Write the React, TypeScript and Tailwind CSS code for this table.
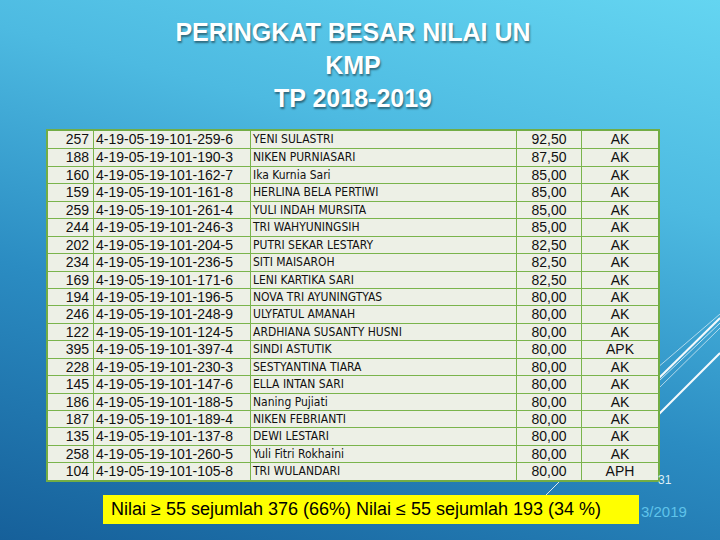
import React from "react";

const rows: [string, string, string, string, string][] = [
  ["257", "4-19-05-19-101-259-6", "YENI SULASTRI", "92,50", "AK"],
  ["188", "4-19-05-19-101-190-3", "NIKEN PURNIASARI", "87,50", "AK"],
  ["160", "4-19-05-19-101-162-7", "Ika Kurnia Sari", "85,00", "AK"],
  ["159", "4-19-05-19-101-161-8", "HERLINA BELA PERTIWI", "85,00", "AK"],
  ["259", "4-19-05-19-101-261-4", "YULI INDAH MURSITA", "85,00", "AK"],
  ["244", "4-19-05-19-101-246-3", "TRI WAHYUNINGSIH", "85,00", "AK"],
  ["202", "4-19-05-19-101-204-5", "PUTRI SEKAR LESTARY", "82,50", "AK"],
  ["234", "4-19-05-19-101-236-5", "SITI MAISAROH", "82,50", "AK"],
  ["169", "4-19-05-19-101-171-6", "LENI KARTIKA SARI", "82,50", "AK"],
  ["194", "4-19-05-19-101-196-5", "NOVA TRI AYUNINGTYAS", "80,00", "AK"],
  ["246", "4-19-05-19-101-248-9", "ULYFATUL AMANAH", "80,00", "AK"],
  ["122", "4-19-05-19-101-124-5", "ARDHIANA SUSANTY HUSNI", "80,00", "AK"],
  ["395", "4-19-05-19-101-397-4", "SINDI ASTUTIK", "80,00", "APK"],
  ["228", "4-19-05-19-101-230-3", "SESTYANTINA TIARA", "80,00", "AK"],
  ["145", "4-19-05-19-101-147-6", "ELLA INTAN SARI", "80,00", "AK"],
  ["186", "4-19-05-19-101-188-5", "Naning Pujiati", "80,00", "AK"],
  ["187", "4-19-05-19-101-189-4", "NIKEN FEBRIANTI", "80,00", "AK"],
  ["135", "4-19-05-19-101-137-8", "DEWI LESTARI", "80,00", "AK"],
  ["258", "4-19-05-19-101-260-5", "Yuli Fitri Rokhaini", "80,00", "AK"],
  ["104", "4-19-05-19-101-105-8", "TRI WULANDARI", "80,00", "APH"],
];

export default function App() {
  return (
    <div className="relative w-[720px] h-[540px] overflow-hidden bg-[linear-gradient(195deg,#64d5f1_0%,#4dbae1_30%,#2b8cc2_62%,#16609a_100%)] font-['Liberation_Sans',Arial,sans-serif]">
      <svg className="absolute left-0 top-0" width="720" height="540" viewBox="0 0 720 540">
        <line x1="600" y1="417" x2="720" y2="314" stroke="#ffffff" strokeOpacity="0.6" strokeWidth="1" />
        <line x1="600" y1="436" x2="720" y2="318" stroke="#ffffff" strokeOpacity="0.95" strokeWidth="2" />
        <line x1="600" y1="437" x2="720" y2="323" stroke="#ffffff" strokeOpacity="0.7" strokeWidth="1" />
        <line x1="600" y1="446" x2="720" y2="328" stroke="#ffffff" strokeOpacity="0.6" strokeWidth="1" />
        <line x1="600" y1="473" x2="720" y2="353" stroke="#ffffff" strokeOpacity="0.95" strokeWidth="2" />
        <line x1="559" y1="482" x2="546" y2="495" stroke="#dfe8ea" strokeWidth="1" />
      </svg>

      <div className="relative flex flex-col items-center pt-[16px] pr-[14px] text-white font-bold text-[25px] leading-[33px] [text-shadow:1px_2px_2px_rgba(0,0,0,0.45)]">
        <div>PERINGKAT BESAR NILAI UN</div>
        <div>KMP</div>
        <div>TP 2018-2019</div>
      </div>

      <div className="relative ml-[46px] mt-[14px] w-[614px] border-2 border-[#72ad45] bg-[#edf0e6] text-[#111] text-[14px]">
        {rows.map((r, i) => (
          <div
            key={i}
            className={`flex h-[17.45px] leading-[16px] ${i > 0 ? "border-t border-[#7ab44c]" : ""}`}
          >
            <div className="w-[46px] shrink-0 text-right pr-[4px] border-r border-[#7ab44c]">{r[0]}</div>
            <div className="w-[157px] shrink-0 pl-[2px] border-r border-[#7ab44c]">{r[1]}</div>
            <div className="w-[266px] shrink-0 pl-[2px] border-r border-[#7ab44c] text-[12px] font-['DejaVu_Sans_Condensed','Liberation_Sans',sans-serif]">{r[2]}</div>
            <div className="w-[65px] shrink-0 text-center border-r border-[#7ab44c]">{r[3]}</div>
            <div className="flex-1 text-center">{r[4]}</div>
          </div>
        ))}
      </div>

      <div className="relative flex mt-[13px] ml-[103px]">
        <div className="w-[536px] h-[29px] bg-[#ffff00] pl-[8px] text-[18px] leading-[29px] text-black whitespace-nowrap">
          Nilai ≥ 55 sejumlah 376 (66%) Nilai ≤ 55 sejumlah 193 (34 %)
        </div>
        <div className="ml-[2px] pt-[2px] text-[15px] leading-[29px] text-[#5fc3ea]">3/2019</div>
      </div>

      <div className="absolute left-[658px] top-[474px] text-[12px] leading-none text-[#dceef6]">31</div>
    </div>
  );
}
